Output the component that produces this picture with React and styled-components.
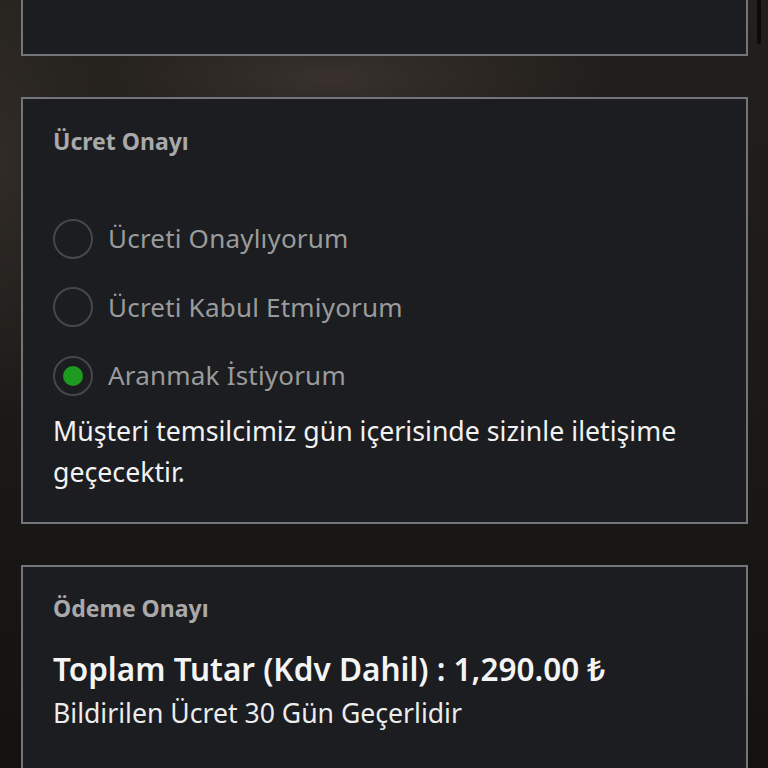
import React from 'react';
import styled, { createGlobalStyle } from 'styled-components';

const GlobalStyle = createGlobalStyle`
  html, body {
    margin: 0;
    padding: 0;
    height: 100%;
    overflow: hidden;
  }
  body {
    font-family: "Noto Sans", "DejaVu Sans", sans-serif;
    background-color: #181614;
    background-image:
      radial-gradient(ellipse 280px 80px at 330px 78px, rgba(72, 62, 56, 0.6), rgba(0, 0, 0, 0) 100%),
      radial-gradient(ellipse 120px 260px at 0px 160px, rgba(62, 55, 50, 0.55), rgba(0, 0, 0, 0) 100%),
      linear-gradient(180deg, #221f1c 0%, #1b1917 55%, #141210 100%);
  }
`;

const Page = styled.div`
  position: relative;
  width: 768px;
  height: 768px;
  overflow: hidden;
  padding: 0 21px;
  box-sizing: border-box;
`;

const Stack = styled.div`
  display: flex;
  flex-direction: column;
  gap: 41px;
  margin-top: -100px;
`;

const Card = styled.section`
  background: #1c1d20;
  border: 2px solid #74757a;
  box-sizing: border-box;
  width: 727px;
  padding: ${(p) => p.$pad || '0'};
  min-height: ${(p) => p.$h || 'auto'};
`;

const CardTitle = styled.h3`
  margin: 0;
  font-size: 23px;
  font-weight: 700;
  color: #a9a9ab;
  line-height: 28px;
`;

const RadioList = styled.div`
  display: flex;
  flex-direction: column;
  gap: 27.5px;
  margin-top: 63px;
`;

const RadioRow = styled.label`
  display: flex;
  align-items: center;
  gap: 15px;
  height: 41px;
`;

const RadioCircle = styled.span`
  width: 40px;
  height: 40px;
  border-radius: 50%;
  border: 2px solid #46474a;
  box-sizing: border-box;
  display: flex;
  align-items: center;
  justify-content: center;
  flex-shrink: 0;

  &::after {
    content: '';
    width: 20px;
    height: 20px;
    border-radius: 50%;
    background: #1e9a21;
    display: ${(p) => (p.$checked ? 'block' : 'none')};
  }
`;

const RadioLabel = styled.span`
  font-size: 26px;
  line-height: 41px;
  color: #9a9b9d;
  letter-spacing: 0.2px;
`;

const Note = styled.p`
  margin: 14px 0 0;
  font-size: 26.7px;
  line-height: 41px;
  color: #f2f2f2;
`;

const Total = styled.div`
  margin-top: 29px;
  font-size: 31.5px;
  font-weight: 600;
  color: #f4f4f4;
  line-height: 36px;
`;

const Validity = styled.div`
  margin-top: 11px;
  font-size: 26.6px;
  color: #ececec;
  line-height: 30px;
`;

const ScrollThumb = styled.div`
  position: absolute;
  top: 0;
  right: 7px;
  width: 4px;
  height: 44px;
  border-radius: 2px;
  background: #0c0b0a;
`;

const options = [
  { label: 'Ücreti Onaylıyorum', checked: false },
  { label: 'Ücreti Kabul Etmiyorum', checked: false },
  { label: 'Aranmak İstiyorum', checked: true },
];

export default function App() {
  return (
    <>
      <GlobalStyle />
      <Page>
        <Stack>
          <Card $h="156px" />
          <Card $pad="28px 30px 30px">
            <CardTitle>Ücret Onayı</CardTitle>
            <RadioList>
              {options.map((o) => (
                <RadioRow key={o.label}>
                  <RadioCircle $checked={o.checked} />
                  <RadioLabel>{o.label}</RadioLabel>
                </RadioRow>
              ))}
            </RadioList>
            <Note>Müşteri temsilcimiz gün içerisinde sizinle iletişime geçecektir.</Note>
          </Card>
          <Card $pad="27px 30px 60px" $h="260px">
            <CardTitle>Ödeme Onayı</CardTitle>
            <Total>Toplam Tutar (Kdv Dahil) : 1,290.00 ₺</Total>
            <Validity>Bildirilen Ücret 30 Gün Geçerlidir</Validity>
          </Card>
        </Stack>
        <ScrollThumb />
      </Page>
    </>
  );
}
